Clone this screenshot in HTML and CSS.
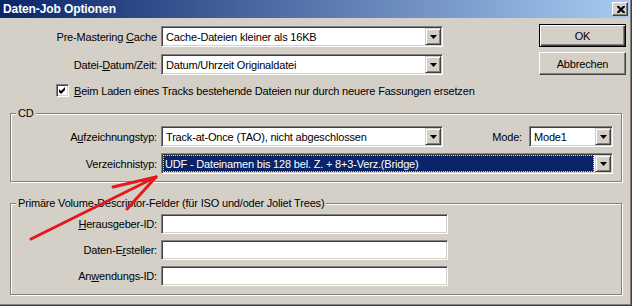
FILE: index.html
```html
<!DOCTYPE html>
<html lang="de">
<head>
<meta charset="utf-8">
<title>Daten-Job Optionen</title>
<link rel="stylesheet" href="styles.css">
</head>
<body>
<div class="window">
  <div class="frame">
    <div class="titlebar">
      <span class="title">Daten-Job Optionen</span>
      <span class="close"><svg width="8" height="7" viewBox="0 0 8 7"><path d="M0 0h2l2 2 2-2h2v1L5.5 3.5 8 6v1H6L4 5 2 7H0V6l2.5-2.5L0 1z" fill="#000"/></svg></span>
    </div>
    <div class="content">
      <div class="top">
        <div class="form">
          <div class="row">
            <span class="lbl top-lbl">Pre-Mastering <u>C</u>ache</span>
            <div class="combo w-main"><span class="val">Cache-Dateien kleiner als 16KB</span><span class="ddbtn"><svg width="7" height="4" viewBox="0 0 7 4"><path d="M0 0h7L3.5 4z" fill="#000"/></svg></span></div>
          </div>
          <div class="row gap7">
            <span class="lbl top-lbl">Datei-<u>D</u>atum/Zeit:</span>
            <div class="combo w-main"><span class="val">Datum/Uhrzeit Originaldatei</span><span class="ddbtn"><svg width="7" height="4" viewBox="0 0 7 4"><path d="M0 0h7L3.5 4z" fill="#000"/></svg></span></div>
          </div>
          <div class="check-row">
            <span class="checkbox"><svg width="7" height="7" viewBox="0 0 7 7"><path d="M0 2L2 4L6 0V3L2 7L0 5z" fill="#000"/></svg></span>
            <span class="check-text"><u>B</u>eim Laden eines Tracks bestehende Dateien nur durch neuere Fassungen ersetzen</span>
          </div>
        </div>
        <div class="buttons">
          <div class="btn default">OK</div>
          <div class="btn">Abbrechen</div>
        </div>
      </div>

      <div class="group cd">
        <div class="group-title">CD</div>
        <div class="row grow-first">
          <span class="lbl grp-lbl">A<u>u</u>fzeichnungstyp:</span>
          <div class="combo w-main"><span class="val">Track-at-Once (TAO), nicht abgeschlossen</span><span class="ddbtn"><svg width="7" height="4" viewBox="0 0 7 4"><path d="M0 0h7L3.5 4z" fill="#000"/></svg></span></div>
          <span class="mode-lbl">Mode:</span>
          <div class="combo w-mode"><span class="val">Mode1</span><span class="ddbtn"><svg width="7" height="4" viewBox="0 0 7 4"><path d="M0 0h7L3.5 4z" fill="#000"/></svg></span></div>
        </div>
        <div class="row gap6">
          <span class="lbl grp-lbl">Verzeichnistyp:</span>
          <div class="combo w-wide"><span class="val sel">UDF - Dateinamen bis 128 bel. Z. + 8+3-Verz.(Bridge)</span><span class="ddbtn"><svg width="7" height="4" viewBox="0 0 7 4"><path d="M0 0h7L3.5 4z" fill="#000"/></svg></span></div>
        </div>
      </div>

      <div class="group pvd">
        <div class="group-title">Primäre Volume-Descriptor-Felder (für ISO und/oder Joliet Trees)</div>
        <div class="frow first">
          <span class="lbl grp-lbl"><u>H</u>erausgeber-ID:</span>
          <div class="field"></div>
        </div>
        <div class="frow">
          <span class="lbl grp-lbl">Daten-E<u>r</u>steller:</span>
          <div class="field"></div>
        </div>
        <div class="frow">
          <span class="lbl grp-lbl">An<u>w</u>endungs-ID:</span>
          <div class="field"></div>
        </div>
      </div>
    </div>
  </div>
  <svg class="arrow" width="632" height="306" viewBox="0 0 632 306">
    <g stroke="#e3191c" stroke-width="3" stroke-linecap="round" fill="none">
      <path d="M31 239L156 177"/>
      <path d="M113 187L156 177"/>
      <path d="M127 209L156 177"/>
    </g>
  </svg>
</div>
</body>
</html>
```

FILE: styles.css
```css
* { box-sizing: border-box; }

html, body {
  margin: 0;
  padding: 0;
  background: #d4d0c8;
}

body {
  font-family: "Liberation Sans", Arial, sans-serif;
  font-size: 11px;
  letter-spacing: -0.18px;
  color: #000;
}

.window {
  position: relative;
  width: 632px;
  height: 306px;
  background: #d4d0c8;
  border-right: 1px solid #404040;
  border-bottom: 1px solid #404040;
}

.frame {
  height: 100%;
  border-right: 1px solid #808080;
  border-bottom: 1px solid #808080;
  padding-right: 1px;
}

.titlebar {
  height: 18px;
  margin-bottom: 1px;
  display: flex;
  align-items: center;
  justify-content: space-between;
  padding: 0 1px 0 3px;
  background: linear-gradient(to right, #0a246a, #a6caf0);
}

.title {
  color: #fff;
  font-weight: bold;
  font-size: 12px;
  letter-spacing: -0.1px;
  line-height: 18px;
}

.close {
  width: 16px;
  height: 14px;
  display: flex;
  align-items: center;
  justify-content: center;
  background: #d4d0c8;
  border: 1px solid;
  border-color: #fff #404040 #404040 #fff;
  box-shadow: inset -1px -1px #808080;
  padding-left: 1px;
}

.top {
  display: flex;
  padding-top: 5px;
}

.form {
  margin-top: 2px;
}

.row {
  display: flex;
  align-items: center;
  height: 21px;
}

.gap7 { margin-top: 7px; }
.gap6 { margin-top: 6px; }

.lbl {
  text-align: right;
  margin-right: 4px;
  white-space: nowrap;
}

.top-lbl { width: 157px; }
.grp-lbl { width: 146px; }

.combo {
  height: 21px;
  display: flex;
  background: #fff;
  border: 1px solid;
  border-color: #808080 #fff #fff #808080;
  box-shadow: inset 1px 1px #404040, inset -1px -1px #d4d0c8;
  padding: 1px;
}

.w-main { width: 282px; }
.w-mode { width: 84px; }
.w-wide { width: 452px; }

.val {
  flex: 1;
  display: flex;
  align-items: center;
  padding-left: 3px;
  white-space: nowrap;
  overflow: hidden;
}

.val.sel {
  background: #0a246a;
  color: #fff;
  outline: 1px dotted #e8d890;
  outline-offset: -1px;
  padding-left: 2px;
  margin-right: 1px;
}

.ddbtn {
  width: 16px;
  height: 17px;
  display: flex;
  align-items: center;
  justify-content: center;
  background: #d4d0c8;
  border: 1px solid;
  border-color: #d4d0c8 #404040 #404040 #d4d0c8;
  box-shadow: inset 1px 1px #fff, inset -1px -1px #808080;
}

.check-row {
  display: flex;
  align-items: center;
  height: 13px;
  margin-top: 9px;
  padding-left: 56px;
}

.checkbox {
  width: 13px;
  height: 13px;
  display: flex;
  align-items: center;
  justify-content: center;
  background: #fff;
  border: 1px solid;
  border-color: #808080 #fff #fff #808080;
  box-shadow: inset 1px 1px #404040, inset -1px -1px #d4d0c8;
  margin-right: 5px;
}

.check-text { white-space: nowrap; }

.buttons {
  margin-left: auto;
  margin-right: 3px;
  display: flex;
  flex-direction: column;
  gap: 5px;
}

.btn {
  width: 87px;
  height: 23px;
  display: flex;
  align-items: center;
  justify-content: center;
  background: #d4d0c8;
  border: 1px solid;
  border-color: #fff #404040 #404040 #fff;
  box-shadow: inset -1px -1px #808080;
}

.btn.default {
  border-color: #000;
  box-shadow: inset 1px 1px #fff, inset -1px -1px #404040, inset -2px -2px #808080;
}

.group {
  margin: 0 7px 0 10px;
  border: 1px solid #808080;
  box-shadow: inset 1px 1px #fff, 1px 1px #fff;
  padding: 0 8px 0 0;
}

.cd {
  margin-top: 16px;
  padding-bottom: 7px;
}

.pvd {
  margin-top: 21px;
  padding-bottom: 8px;
}

.group-title {
  width: fit-content;
  margin: -7px 0 0 5px;
  padding: 0 2px;
  line-height: 13px;
  background: #d4d0c8;
  white-space: nowrap;
}

.grow-first { margin-top: 6px; }

.mode-lbl {
  margin-left: auto;
  margin-right: 7px;
}

.frow {
  display: flex;
  align-items: center;
  height: 20px;
  margin-top: 6px;
}

.frow.first { margin-top: 4px; }

.field {
  width: 287px;
  height: 20px;
  background: #fff;
  border: 1px solid;
  border-color: #808080 #fff #fff #808080;
  box-shadow: inset 1px 1px #404040, inset -1px -1px #d4d0c8;
}

.arrow {
  position: absolute;
  left: 0;
  top: 0;
  pointer-events: none;
}
```
